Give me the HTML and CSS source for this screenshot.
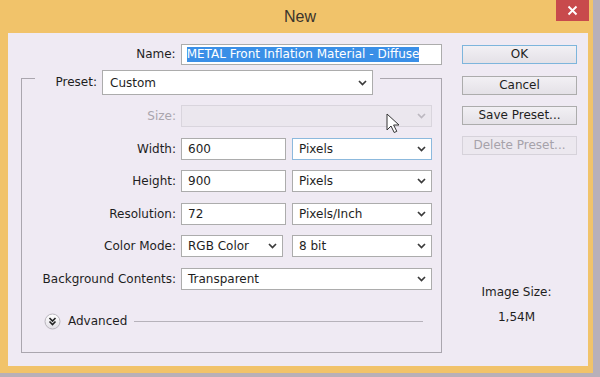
FILE: index.html
```html
<!DOCTYPE html>
<html>
<head>
<meta charset="utf-8">
<link rel="stylesheet" href="styles.css">
</head>
<body>
<div class="window">
  <div class="titlebar">
    <span></span>
    <span class="title">New</span>
    <span class="close"><svg width="11" height="11" viewBox="0 0 11 11"><path d="M1.5 1.5l8 8M9.5 1.5l-8 8" stroke="#fff" stroke-width="1.9"/></svg></span>
  </div>
  <div class="content">
    <div class="main">
      <div class="name-row">
        <span class="lbl">Name:</span>
        <div class="field name-field"><span class="sel">METAL Front Inflation Material - Diffuse</span></div>
      </div>
      <div class="group">
        <div class="preset-row">
          <span class="lbl">Preset:</span>
          <div class="field preset-field"><span>Custom</span><svg class="chev" width="9" height="6" viewBox="0 0 9 6"><path d="M1 1l3.5 3.5L8 1"/></svg></div>
        </div>
        <div class="rows">
          <div class="row">
            <span class="lbl dim">Size:</span>
            <div class="field f-full off"><span></span><svg class="chev" width="9" height="6" viewBox="0 0 9 6"><path d="M1 1l3.5 3.5L8 1"/></svg></div>
          </div>
          <div class="row">
            <span class="lbl">Width:</span>
            <div class="field f-num"><span>600</span></div>
            <div class="field f-unit focus"><span>Pixels</span><svg class="chev" width="9" height="6" viewBox="0 0 9 6"><path d="M1 1l3.5 3.5L8 1"/></svg></div>
          </div>
          <div class="row">
            <span class="lbl">Height:</span>
            <div class="field f-num"><span>900</span></div>
            <div class="field f-unit"><span>Pixels</span><svg class="chev" width="9" height="6" viewBox="0 0 9 6"><path d="M1 1l3.5 3.5L8 1"/></svg></div>
          </div>
          <div class="row">
            <span class="lbl">Resolution:</span>
            <div class="field f-num"><span>72</span></div>
            <div class="field f-unit"><span>Pixels/Inch</span><svg class="chev" width="9" height="6" viewBox="0 0 9 6"><path d="M1 1l3.5 3.5L8 1"/></svg></div>
          </div>
          <div class="row">
            <span class="lbl">Color Mode:</span>
            <div class="field f-mode"><span>RGB Color</span><svg class="chev" width="9" height="6" viewBox="0 0 9 6"><path d="M1 1l3.5 3.5L8 1"/></svg></div>
            <div class="field f-bit"><span>8 bit</span><svg class="chev" width="9" height="6" viewBox="0 0 9 6"><path d="M1 1l3.5 3.5L8 1"/></svg></div>
          </div>
          <div class="row">
            <span class="lbl">Background Contents:</span>
            <div class="field f-full"><span>Transparent</span><svg class="chev" width="9" height="6" viewBox="0 0 9 6"><path d="M1 1l3.5 3.5L8 1"/></svg></div>
          </div>
        </div>
        <div class="advanced">
          <svg class="adv-icon" width="17" height="17" viewBox="0 0 17 17">
            <defs><linearGradient id="g" x1="0" y1="0" x2="0" y2="1"><stop offset="0" stop-color="#ffffff"/><stop offset="1" stop-color="#e2dfe6"/></linearGradient></defs>
            <circle cx="8.5" cy="8.5" r="7.5" fill="url(#g)" stroke="#b9b5bd"/>
            <path d="M5.5 5l3 3 3-3M5.5 8.5l3 3 3-3" fill="none" stroke="#222" stroke-width="1.6"/>
          </svg>
          <span class="adv-text">Advanced</span>
          <span class="adv-line"></span>
        </div>
      </div>
    </div>
    <div class="side">
      <div class="btn ok">OK</div>
      <div class="btn">Cancel</div>
      <div class="btn">Save Preset...</div>
      <div class="btn off">Delete Preset...</div>
      <div class="info">Image Size:</div>
      <div class="info val">1,54M</div>
    </div>
  </div>
</div>
<svg class="cursor" width="14" height="21" viewBox="0 0 14 21"><path d="M1 1v16l4-4 3.2 6.5 2.6-1.2L7.6 12H13z" fill="#fff" stroke="#333" stroke-width="1" stroke-linejoin="round"/></svg>
</body>
</html>
```
FILE: styles.css
```css
body {
  margin: 0;
  width: 600px;
  height: 377px;
  overflow: hidden;
  background: #b8b0b9;
  font-family: "DejaVu Sans", Verdana, sans-serif;
  font-size: 12px;
  color: #1e1e1e;
}

.window {
  width: 593px;
  height: 373px;
  background: #f1c36a;
  display: flex;
  flex-direction: column;
}

.titlebar {
  height: 33px;
  display: grid;
  grid-template-columns: 1fr auto 1fr;
}

.title {
  font-family: "Liberation Sans", Arial, sans-serif;
  font-size: 16px;
  line-height: 33px;
  color: #3a332c;
  padding-left: 7px;
}

.close {
  justify-self: end;
  align-self: start;
  width: 33px;
  height: 21px;
  margin-right: 4px;
  background: #c84a4c;
  display: flex;
  align-items: center;
  justify-content: center;
}

.content {
  margin: 0 5px 0 8px;
  height: 333px;
  box-sizing: border-box;
  padding: 11px 11px 0 13px;
  background: #efeaf3;
  display: flex;
}

.main {
  width: 421px;
}

.lbl {
  text-align: right;
  margin-right: 5px;
  white-space: nowrap;
}

.lbl.dim {
  color: #a9a5ad;
}

.name-row {
  display: flex;
  height: 21px;
}

.name-row .lbl {
  width: 155px;
  line-height: 21px;
}

.field {
  box-sizing: border-box;
  background: #fff;
  border: 1px solid #acacac;
  display: flex;
  align-items: center;
  justify-content: space-between;
  padding: 0 5px 0 6px;
  white-space: nowrap;
}

.field.focus {
  border-color: #8cb9dd;
}

.field.off {
  background: #ebe7ee;
  border-color: #d9d5dd;
}

.chev path {
  fill: none;
  stroke: #3a3a3a;
  stroke-width: 1.7;
}

.field.off .chev path {
  stroke: #bcb8c0;
}

.name-field {
  width: 262px;
  height: 21px;
  padding-left: 5px;
}

.sel {
  background: #3a8fe7;
  color: #fff;
  line-height: 15px;
}

.group {
  margin-top: 13px;
  height: 275px;
  box-sizing: border-box;
  border: 1px solid #aaa6ae;
  display: flex;
  flex-direction: column;
}

.preset-row {
  align-self: flex-start;
  margin: -9px 0 0 13px;
  padding-right: 7px;
  background: #efeaf3;
  display: flex;
}

.preset-row .lbl {
  width: 62px;
  line-height: 25px;
}

.preset-field {
  width: 271px;
  height: 25px;
  padding-left: 7px;
}

.rows {
  margin-top: 10px;
  display: flex;
  flex-direction: column;
  gap: 10.6px;
}

.row {
  display: flex;
  height: 22px;
}

.row .lbl {
  width: 154px;
  line-height: 22px;
}

.f-num {
  width: 105px;
}

.f-unit {
  width: 140px;
  margin-left: 6px;
}

.f-mode {
  width: 102px;
}

.f-bit {
  width: 140px;
  margin-left: 9px;
}

.f-full {
  width: 251px;
}

.advanced {
  margin-top: 23px;
  height: 17px;
  display: flex;
  align-items: center;
  padding: 0 18px 0 22px;
}

.adv-text {
  margin-left: 7px;
}

.adv-line {
  flex: 1;
  height: 1px;
  background: #b6b2ba;
  margin-left: 7px;
}

.side {
  margin-left: 20px;
  width: 115px;
  padding-top: 1px;
  display: flex;
  flex-direction: column;
}

.btn {
  height: 19px;
  box-sizing: border-box;
  border: 1px solid #acacac;
  background: linear-gradient(#f2f0f4, #e4e1e7);
  text-align: center;
  line-height: 17px;
  margin-top: 11px;
}

.btn.ok {
  margin-top: 0;
  border-color: #7db5dc;
}

.btn.ok + .btn {
  margin-top: 12px;
}

.btn.off {
  color: #a6a2aa;
  border-color: #d6d2da;
  background: #ece8ef;
}

.info {
  margin-top: 129px;
  text-align: center;
  line-height: 16px;
  padding-right: 6px;
}

.info.val {
  margin-top: 9px;
}

.cursor {
  position: absolute;
  left: 386px;
  top: 113px;
}
```
